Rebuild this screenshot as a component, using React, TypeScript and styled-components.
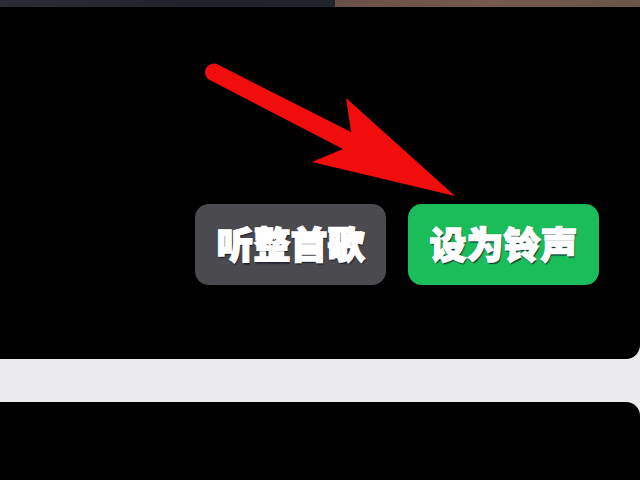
import React from "react";
import styled, { createGlobalStyle } from "styled-components";

const Global = createGlobalStyle`
  html, body { margin: 0; padding: 0; background: #000; }
  body { width: 640px; height: 480px; overflow: hidden; font-family: "Noto Sans CJK SC", "Noto Sans", sans-serif; }
`;

const Page = styled.div`
  width: 640px;
  height: 480px;
  display: flex;
  flex-direction: column;
  background: #ececee;
`;

const TopStrip = styled.div`
  height: 7px;
  display: flex;
  background: #000;
`;

const StripPart = styled.div<{ $w: string; $c: string }>`
  width: ${(p) => p.$w};
  background: ${(p) => p.$c};
`;

const UpperPanel = styled.div`
  position: relative;
  height: 352px;
  background: #000;
  border-bottom-right-radius: 14px;
  display: flex;
  flex-direction: column;
  align-items: flex-end;
  padding: 197px 41px 0 0;
  box-sizing: border-box;
`;

const ButtonRow = styled.div`
  display: flex;
  gap: 22px;
`;

const Button = styled.div<{ $bg: string }>`
  width: 191px;
  height: 81px;
  border-radius: 14px;
  background: ${(p) => p.$bg};
  display: flex;
  align-items: center;
  justify-content: center;
  color: #fff;
  font-family: "Noto Sans CJK SC", sans-serif;
  font-weight: 900;
  font-size: 37px;
  line-height: 1;
  padding-bottom: 2px;
  box-sizing: border-box;
  -webkit-text-stroke: 1.4px #fff;
  text-shadow: 1px 1.5px 1px rgba(20, 24, 40, 0.8), 0 0 2px rgba(0, 0, 0, 0.5);
`;

const Band = styled.div`
  height: 43px;
`;

const LowerPanel = styled.div`
  flex: 1;
  background: #000;
  border-top-right-radius: 14px;
`;

const ArrowSvg = styled.svg`
  position: absolute;
  left: 0;
  top: 0;
  width: 640px;
  height: 352px;
  pointer-events: none;
`;

export default function App() {
  return (
    <>
      <Global />
      <Page>
        <TopStrip>
          <StripPart $w="335px" $c="linear-gradient(90deg, #2a2d36, #1f2229 60%, #23252c)" />
          <StripPart $w="305px" $c="linear-gradient(90deg, #6a5145, #74594c 50%, #6b5648)" />
        </TopStrip>
        <UpperPanel>
          <ArrowSvg viewBox="0 0 640 352">
            <path
              d="M351,125 L346,91 L455,189 L312,155 L343,142 L209.8,73 A8.5,8.5 0 0 1 217.7,57.5 Z"
              fill="#f20d0d"
            />
          </ArrowSvg>
          <ButtonRow>
            <Button $bg="#4a4a4f">听整首歌</Button>
            <Button $bg="#1bbd5b">设为铃声</Button>
          </ButtonRow>
        </UpperPanel>
        <Band />
        <LowerPanel />
      </Page>
    </>
  );
}
